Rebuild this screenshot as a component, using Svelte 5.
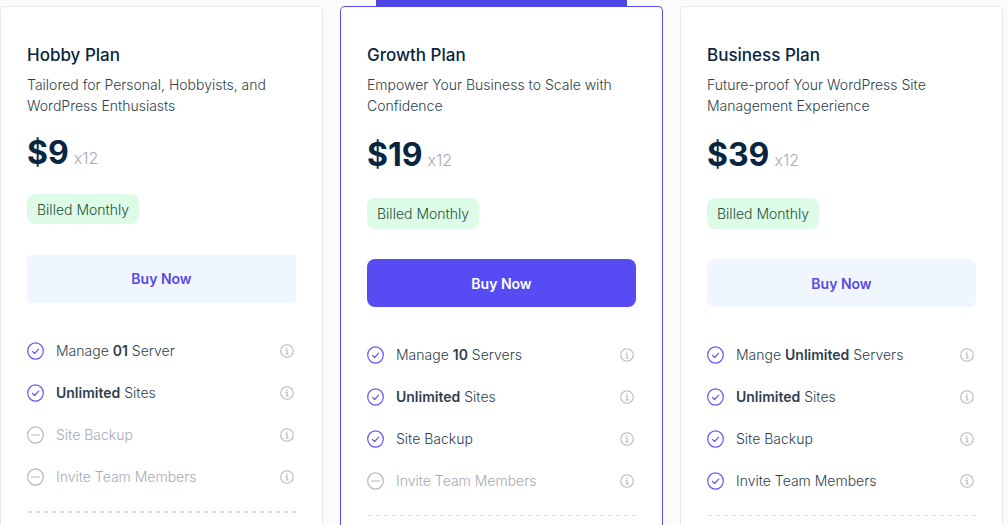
<script lang="ts">
	interface Feature {
		before?: string;
		strong?: string;
		after?: string;
		included: boolean;
	}

	interface Plan {
		id: string;
		name: string;
		description: string;
		price: number;
		features: Feature[];
	}

	const plans: Plan[] = [
		{
			id: 'hobby',
			name: 'Hobby Plan',
			description: 'Tailored for Personal, Hobbyists, and WordPress Enthusiasts',
			price: 9,
			features: [
				{ before: 'Manage ', strong: '01', after: ' Server', included: true },
				{ strong: 'Unlimited', after: ' Sites', included: true },
				{ before: 'Site Backup', included: false },
				{ before: 'Invite Team Members', included: false }
			]
		},
		{
			id: 'growth',
			name: 'Growth Plan',
			description: 'Empower Your Business to Scale with Confidence',
			price: 19,
			features: [
				{ before: 'Manage ', strong: '10', after: ' Servers', included: true },
				{ strong: 'Unlimited', after: ' Sites', included: true },
				{ before: 'Site Backup', included: true },
				{ before: 'Invite Team Members', included: false }
			]
		},
		{
			id: 'business',
			name: 'Business Plan',
			description: 'Future-proof Your WordPress Site Management Experience',
			price: 39,
			features: [
				{ before: 'Mange ', strong: 'Unlimited', after: ' Servers', included: true },
				{ strong: 'Unlimited', after: ' Sites', included: true },
				{ before: 'Site Backup', included: true },
				{ before: 'Invite Team Members', included: true }
			]
		}
	];
</script>

<main class="plans">
	{#each plans as plan (plan.id)}
		<section class="plan plan--{plan.id}">
			{#if plan.id === 'growth'}
				<div class="plan__tab"></div>
			{/if}
			<h2 class="plan__name">{plan.name}</h2>
			<p class="plan__description">{plan.description}</p>
			<div class="plan__price">
				<span class="plan__amount">${plan.price}</span>
				<span class="plan__term">x12</span>
			</div>
			<span class="plan__billing">Billed Monthly</span>
			<button class="plan__buy" type="button">Buy Now</button>

			<ul class="features">
				{#each plan.features as feature}
					<li class="feature" class:feature--off={!feature.included}>
						<svg class="feature__mark" viewBox="0 0 17 18" aria-hidden="true">
							<ellipse cx="8.5" cy="9" rx="7.8" ry="8.1" />
							{#if feature.included}
								<path d="M5.4 9.3l2.2 2.2 4.1-4.4" />
							{:else}
								<path d="M4.4 9h8.2" />
							{/if}
						</svg>
						<span class="feature__text">{feature.before ?? ''}<strong>{feature.strong ?? ''}</strong>{feature.after ?? ''}</span>
						<svg class="feature__info" viewBox="0 0 14 14" aria-hidden="true">
							<circle cx="7" cy="7" r="6.3" />
							<path d="M6 6.4h1.1v3.5M6 10h2.3" />
							<circle class="feature__dot" cx="6.9" cy="4.2" r="0.8" />
						</svg>
					</li>
				{/each}
			</ul>
			<hr class="plan__divider" />
		</section>
	{/each}
</main>

<style>
	:global(body) {
		background: #fbfbfc;
	}

	.plans {
		display: grid;
		grid-template-columns: repeat(3, 1fr);
		gap: 17px;
		box-sizing: border-box;
		min-height: 100vh;
		padding: 6px 5px 0 0;
		font-family: Inter, sans-serif;
		font-size: 14px;
		font-weight: 300;
		line-height: 21px;
		color: #2f3f4d;
	}

	.plan {
		position: relative;
		display: flex;
		flex-direction: column;
		align-items: flex-start;
		padding: 36px 26px 0;
		background: #fff;
		border: 1px solid #e5e7eb;
		border-bottom: 0;
		border-radius: 5px 5px 0 0;
	}

	.plan--growth {
		border-color: #574cf4;
	}

	/* Highlight tab sitting on the top edge of the featured card */
	.plan__tab {
		position: absolute;
		right: 35px;
		bottom: 100%;
		left: 35px;
		height: 7px;
		background: #4f46e5;
	}

	.plan__name {
		margin: 0;
		font-size: 17px;
		font-weight: 500;
		line-height: 24px;
		color: #0a2540;
	}

	.plan__description {
		margin: 7px 0 0;
	}

	.plan__price {
		display: flex;
		align-items: baseline;
		gap: 5px;
		margin-top: 17px;
		line-height: 43px;
	}

	.plan__amount {
		font-size: 32px;
		font-weight: 700;
		color: #0a2540;
	}

	.plan__term {
		font-size: 16px;
		color: #a5aab5;
	}

	.plan__billing {
		margin-top: 16px;
		padding: 5px 10px;
		background: #dcfce7;
		border-radius: 8px;
		color: #1f5142;
	}

	.plan__buy {
		width: 100%;
		height: 48px;
		margin-top: 30px;
		padding: 0;
		background: #eff6ff;
		border: 0;
		border-radius: 8px;
		font: inherit;
		font-weight: 600;
		color: #574be4;
		cursor: pointer;
	}

	.plan--growth .plan__buy {
		background: #574cf4;
		color: #fff;
	}

	.plan--hobby .plan__price {
		line-height: 40px;
	}

	.plan--hobby .plan__billing {
		padding-bottom: 4px;
	}

	.plan--hobby .plan__buy {
		margin-top: 31px;
		padding-bottom: 2px;
		border-radius: 4px;
	}

	.features {
		display: flex;
		flex-direction: column;
		gap: 21px;
		width: 100%;
		margin: 37px 0 0;
		padding: 0;
		list-style: none;
	}

	.feature {
		display: flex;
		align-items: center;
	}

	.feature strong {
		font-weight: 600;
	}

	.feature__text {
		flex: 1;
		margin-left: 12px;
	}

	.feature--off .feature__text {
		color: #a5aab5;
	}

	.feature svg {
		fill: none;
		stroke-linecap: round;
		stroke-linejoin: round;
	}

	.feature__mark {
		width: 17px;
		height: 18px;
		stroke: #6357f2;
		stroke-width: 1.2;
	}

	.feature--off .feature__mark {
		stroke: #b4b8c2;
	}

	.feature__info {
		width: 14px;
		height: 14px;
		margin-right: 2px;
		stroke: #b4b8c2;
		stroke-width: 1.1;
	}

	.feature svg .feature__dot {
		fill: #b4b8c2;
		stroke: none;
	}

	.plan__divider {
		width: 100%;
		height: 1px;
		margin: 24px 0 0;
		border: 0;
		background: repeating-linear-gradient(90deg, transparent 0 1px, #dcdde0 1px 5px, transparent 5px 8px);
	}

	.plan--hobby .plan__divider {
		height: 2px;
	}
</style>
